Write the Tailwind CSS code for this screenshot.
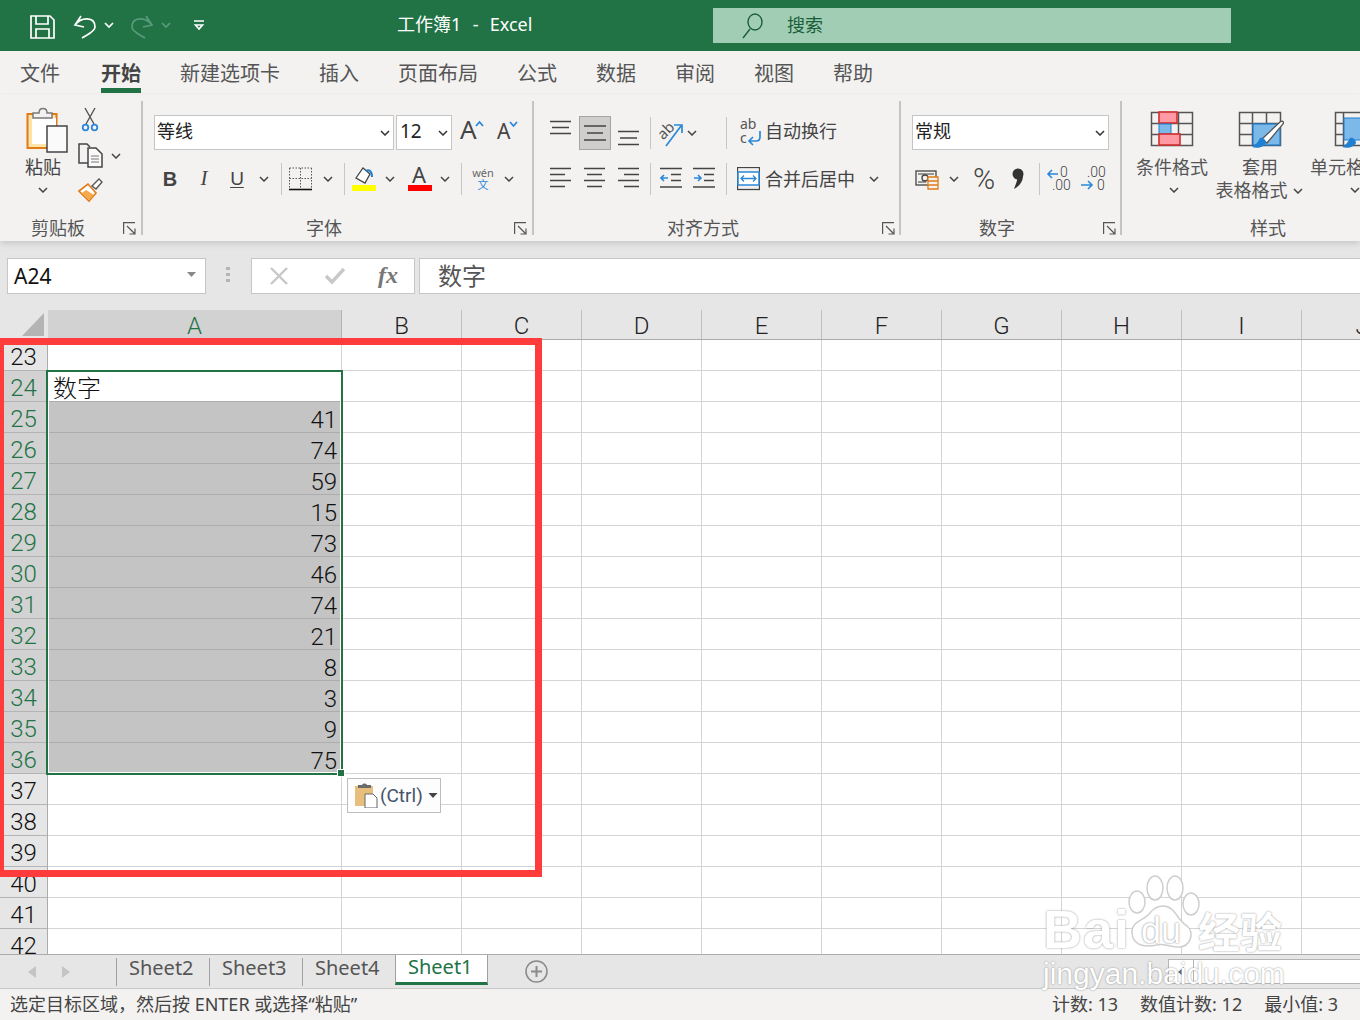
<!DOCTYPE html>
<html lang="zh">
<head>
<meta charset="utf-8">
<title>Excel</title>
<script src="https://cdn.jsdelivr.net/npm/@tailwindcss/browser@4"></script>
</head>
<body class="m-0">
<div class="relative w-[1360px] h-[1020px] overflow-hidden flex flex-col bg-white text-[#444] font-['Noto_Sans','Noto_Sans_CJK_SC',sans-serif]">

  <!-- title bar -->
  <div class="h-[51px] shrink-0 bg-[#217346] flex items-center text-white">
    <svg class="w-[200px] h-[51px] shrink-0 ml-[20px]" viewBox="20 0 200 51" fill="none" stroke="#fff" stroke-width="1.7">
      <path d="M31 16h19l4 4v18H31z"/><path d="M36 16v8h12v-8M36 38v-9h13v9"/>
      <path d="M75 25c6-8 20-9 20 2 0 5-9 8-13 11M81 16l-6 9 9 2"/>
      <path d="M105 23l4 4 4-4"/>
      <path d="M152 25c-6-8-20-9-20 2 0 5 9 8 13 11M146 16l6 9-9 2" stroke="#5a9a7c"/>
      <path d="M162 23l4 4 4-4" stroke="#5a9a7c"/>
      <path d="M194 21h10M195.500 25h7l-3.500 4z"/>
    </svg>
    <div class="ml-[177px] w-[136px] shrink-0 text-[18px] whitespace-pre [word-spacing:1px] -mt-[2px]">工作簿1  -  Excel</div>
    <div class="ml-[180px] w-[518px] h-[35px] bg-[#a0cdb3] flex items-center text-[#1b5e3a] text-[18px]">
      <svg class="w-[26px] h-[28px] ml-[28px]" viewBox="741 11 26 28" fill="none" stroke="#1b5e3a" stroke-width="1.400"><ellipse cx="755" cy="21" rx="7" ry="8"/><path d="M750 28l-7 9"/></svg>
      <span class="ml-[20px]">搜索</span>
    </div>
  </div>

  <!-- tabs -->
  <div class="h-[44px] shrink-0 bg-[#f3f2f1] flex pl-[20px] gap-[39px] text-[20px] leading-[46px] text-[#555]">
    <span class="mr-[2px]">文件</span>
    <span class="relative font-bold text-[#444]">开始<span class="absolute left-0 right-0 top-[37px] h-[5px] bg-[#217346]"></span></span>
    <span>新建选项卡</span><span>插入</span><span>页面布局</span><span>公式</span><span>数据</span><span>审阅</span><span>视图</span><span>帮助</span>
  </div>

  <!-- ribbon -->
  <div class="relative z-10 h-[146px] shrink-0 bg-[#f3f2f1] flex overflow-hidden shadow-[0_3px_6px_rgba(0,0,0,0.12)] text-[18px]">

    <!-- clipboard -->
    <div class="w-[141px] shrink-0 flex flex-col">
      <div class="h-[120px] flex">
        <div class="w-[78px] pt-[12px] flex flex-col items-start">
          <svg class="w-[78px] h-[46px]" viewBox="0 107 78 46" fill="none">
            <rect x="27.500" y="114" width="29" height="34" fill="#fde3a8" stroke="#e07b16" stroke-width="2"/>
            <rect x="32" y="118" width="24" height="26" fill="#fff"/>
            <path d="M33 118v-5h6c0-6 8-6 8 0h5v5z" fill="#f3f2f1" stroke="#7a7a7a" stroke-width="1.500"/>
            <rect x="47" y="126" width="20" height="26" fill="#fafafa" stroke="#444" stroke-width="1.500"/>
          </svg>
          <span class="ml-[25px] mt-[2px] h-[24px] leading-[24px]">粘贴</span>
          <svg class="ml-[38px] mt-[8px] w-[10px] h-[6px]" viewBox="0 0 10 6" fill="none" stroke="#444" stroke-width="1.500"><path d="M1 1l4 4 4-4"/></svg>
        </div>
        <div class="w-[62px] pt-[12px] flex flex-col items-start">
          <svg class="w-[26px] h-[26px]" viewBox="78 107 26 26" fill="none" stroke-width="1.400">
            <path d="M85 108l9 16M95 108l-9 16" stroke="#555"/>
            <circle cx="85.500" cy="127.500" r="2.800" stroke="#2b88d8" stroke-width="1.800"/><circle cx="94.500" cy="127.500" r="2.800" stroke="#2b88d8" stroke-width="1.800"/>
          </svg>
          <div class="flex items-center mt-[10px]">
            <svg class="w-[25px] h-[25px]" viewBox="78 143 25 25" fill="#f3f2f1" stroke="#444" stroke-width="1.500">
              <path d="M88 163h-9v-19h8l3 3"/><path d="M88 148h8l6 6v13H88z" fill="#fafafa"/><path d="M91 156h8M91 159h8M91 162h8" stroke="#777" stroke-width="1"/>
            </svg>
            <svg class="ml-[8px] w-[10px] h-[6px]" viewBox="0 0 10 6" fill="none" stroke="#444" stroke-width="1.500"><path d="M1 1l4 4 4-4"/></svg>
          </div>
          <svg class="mt-[10px] w-[26px] h-[25px]" viewBox="78 178 26 25" fill="none">
            <path d="M79 191l9-7 8 9-7 8z" fill="#fff" stroke="#e07b16" stroke-width="1.600"/><path d="M82 193l7 7 5-5-8-5z" fill="#f5a94a"/>
            <path d="M92 186l7-7 3 3-6 7z" fill="#fff" stroke="#555" stroke-width="1.400"/>
          </svg>
        </div>
      </div>
      <div class="h-[26px] flex items-center text-[#555]">
        <span class="ml-[31px] w-[54px] shrink-0">剪贴板</span>
        <svg class="ml-[38px] w-[13px] h-[13px] shrink-0" viewBox="0 0 13 13" fill="none" stroke="#555" stroke-width="1.200"><path d="M.6 12V.6H12M4 4l8 8M12 6.500V12H6.500"/></svg>
      </div>
    </div>
    <div class="w-[2px] h-[134px] mt-[6px] shrink-0 bg-[#c4c4c4]"></div>

    <!-- font -->
    <div class="w-[389px] shrink-0 flex flex-col">
      <div class="h-[120px] pt-[20px] flex flex-col">
        <div class="flex items-start h-[35px] ml-[11px]">
          <div class="w-[240px] h-[35px] bg-white border border-[#c6c6c6] flex items-center justify-between pl-[2px] pr-[3px] pb-[2px] text-[#222]">
            <span>等线</span>
            <svg class="w-[10px] h-[6px] mt-[2px]" viewBox="0 0 10 6" fill="none" stroke="#333" stroke-width="1.500"><path d="M1 1l4 4 4-4"/></svg>
          </div>
          <div class="ml-[2px] w-[56px] h-[35px] bg-white border border-[#c6c6c6] flex items-center justify-between pl-[3px] pr-[3px] pb-[2px] text-[19px] text-[#222]">
            <span>12</span>
            <svg class="w-[10px] h-[6px] mt-[2px]" viewBox="0 0 10 6" fill="none" stroke="#333" stroke-width="1.500"><path d="M1 1l4 4 4-4"/></svg>
          </div>
          <svg class="ml-[8px] w-[25px] h-[30px] overflow-visible" viewBox="460 113 25 30" fill="none">
            <text x="460" y="137" font-size="26" fill="#444" stroke="none">A</text>
            <path d="M476 124l3.500-4 3.500 4" stroke="#2b88d8" stroke-width="1.800"/>
          </svg>
          <svg class="ml-[12px] w-[21px] h-[30px] overflow-visible" viewBox="497 113 21 30" fill="none">
            <text x="497" y="137" font-size="21" fill="#444" stroke="none">A</text>
            <path d="M510 120l3.500 4 3.500-4" stroke="#2b88d8" stroke-width="1.800"/>
          </svg>
        </div>
        <div class="flex items-center h-[26px] mt-[16px]">
          <span class="ml-[15px] w-[24px] text-center font-['Liberation_Sans',sans-serif] font-bold text-[20px]">B</span>
          <span class="ml-[10px] w-[24px] text-center font-['Liberation_Serif',serif] italic text-[21px]">I</span>
          <span class="ml-[9px] w-[24px] text-center font-['Liberation_Sans',sans-serif] text-[19px] underline underline-offset-2">U</span>
          <svg class="ml-[10px] w-[10px] h-[6px]" viewBox="0 0 10 6" fill="none" stroke="#444" stroke-width="1.500"><path d="M1 1l4 4 4-4"/></svg>
          <div class="ml-[12px] w-px h-[32px] bg-[#c6c6c6]"></div>
          <svg class="ml-[7px] w-[24px] h-[24px]" viewBox="289 167 24 24" fill="none" stroke="#555">
            <path d="M289.500 168h22M289.500 168v21M311.500 168v21M289.500 178.500h22M300.500 168v21" stroke-dasharray="1.500 1.500"/>
            <path d="M289 189.500h23" stroke="#111" stroke-width="1.600"/>
          </svg>
          <svg class="ml-[10px] w-[10px] h-[6px]" viewBox="0 0 10 6" fill="none" stroke="#444" stroke-width="1.500"><path d="M1 1l4 4 4-4"/></svg>
          <div class="ml-[11px] w-px h-[32px] bg-[#c6c6c6]"></div>
          <svg class="ml-[7px] w-[24px] h-[26px]" viewBox="352 166 24 26" fill="none">
            <path d="M356 178l7-10 7 6-5 9z" fill="#fff" stroke="#444" stroke-width="1.300"/>
            <path d="M366 171c3-2 6 0 6 6" stroke="#1f7fd0" stroke-width="2"/>
            <rect x="352" y="185" width="24" height="6" fill="#ffff00"/>
          </svg>
          <svg class="ml-[9px] w-[10px] h-[6px]" viewBox="0 0 10 6" fill="none" stroke="#444" stroke-width="1.500"><path d="M1 1l4 4 4-4"/></svg>
          <svg class="ml-[13px] w-[24px] h-[26px] overflow-visible" viewBox="408 166 24 26">
            <text x="412" y="183" font-size="22" fill="#444">A</text>
            <rect x="408" y="185" width="24" height="6" fill="#ff0000"/>
          </svg>
          <svg class="ml-[8px] w-[10px] h-[6px]" viewBox="0 0 10 6" fill="none" stroke="#444" stroke-width="1.500"><path d="M1 1l4 4 4-4"/></svg>
          <div class="ml-[11px] w-px h-[32px] bg-[#c6c6c6]"></div>
          <div class="ml-[9px] w-[24px] flex flex-col items-center leading-[12px]">
            <span class="text-[11px] h-[12px] text-[#666]">wén</span><span class="text-[11px] h-[12px] text-[#2b88d8]">文</span>
          </div>
          <svg class="ml-[9px] w-[10px] h-[6px]" viewBox="0 0 10 6" fill="none" stroke="#444" stroke-width="1.500"><path d="M1 1l4 4 4-4"/></svg>
        </div>
      </div>
      <div class="h-[26px] flex items-center text-[#555]">
        <span class="ml-[163px] w-[36px] shrink-0">字体</span>
        <svg class="ml-[172px] w-[13px] h-[13px] shrink-0" viewBox="0 0 13 13" fill="none" stroke="#555" stroke-width="1.200"><path d="M.6 12V.6H12M4 4l8 8M12 6.500V12H6.500"/></svg>
      </div>
    </div>
    <div class="w-[2px] h-[134px] mt-[6px] shrink-0 bg-[#c4c4c4]"></div>

    <!-- alignment -->
    <div class="w-[365px] shrink-0 flex flex-col">
      <div class="h-[120px] pt-[20px] flex flex-col">
        <div class="flex items-center h-[35px]">
          <svg class="ml-[16px] w-[22px] h-[34px]" viewBox="550 115 22 34" fill="none" stroke="#444" stroke-width="1.500"><path d="M550 120.500h21M552 126.500h17M550 132.500h21"/></svg>
          <div class="ml-[7px] w-[32px] h-[34px] bg-[#cfcecd] border border-[#a5a5a5] flex items-center justify-center">
            <svg class="w-[22px] h-[22px]" viewBox="0 0 22 22" fill="none" stroke="#444" stroke-width="1.500"><path d="M0 4h22M3 11h16M0 18h22"/></svg>
          </div>
          <svg class="ml-[7px] w-[22px] h-[34px]" viewBox="618 115 22 34" fill="none" stroke="#444" stroke-width="1.500"><path d="M618 130.500h21M620 137h17M618 143.500h21"/></svg>
          <div class="ml-[10px] w-px h-[32px] bg-[#c6c6c6]"></div>
          <svg class="ml-[7px] w-[26px] h-[28px] overflow-visible" viewBox="658 117 26 28" fill="none">
            <text x="658" y="134" font-size="15" fill="#555" transform="rotate(-45 666 130)">ab</text>
            <path d="M666 144l15-20M674 123h8v8" stroke="#2b88d8" stroke-width="1.700"/>
          </svg>
          <svg class="ml-[3px] w-[10px] h-[6px]" viewBox="0 0 10 6" fill="none" stroke="#444" stroke-width="1.500"><path d="M1 1l4 4 4-4"/></svg>
          <div class="ml-[29px] w-px h-[32px] bg-[#c6c6c6]"></div>
          <svg class="ml-[13px] w-[23px] h-[30px] overflow-visible" viewBox="740 117 23 30" fill="none">
            <text x="740" y="128" font-size="14" fill="#555">ab</text><text x="740" y="142" font-size="14" fill="#555">c</text>
            <path d="M760 130v6c0 3-2 4-4 4h-6M753 136l-4 4 4 4" stroke="#2b88d8" stroke-width="1.700"/>
          </svg>
          <span class="ml-[2px] -mt-[2px] text-[#444]">自动换行</span>
        </div>
        <div class="flex items-center h-[26px] mt-[16px]">
          <svg class="ml-[16px] w-[22px] h-[24px]" viewBox="550 167 22 24" fill="none" stroke="#444" stroke-width="1.500"><path d="M550 168.500h21M550 174.500h15M550 180.500h21M550 186.500h15"/></svg>
          <svg class="ml-[12px] w-[22px] h-[24px]" viewBox="584 167 22 24" fill="none" stroke="#444" stroke-width="1.500"><path d="M584 168.500h21M587 174.500h15M584 180.500h21M587 186.500h15"/></svg>
          <svg class="ml-[12px] w-[22px] h-[24px]" viewBox="618 167 22 24" fill="none" stroke="#444" stroke-width="1.500"><path d="M618 168.500h21M624 174.500h15M618 180.500h21M624 186.500h15"/></svg>
          <div class="ml-[10px] w-px h-[32px] bg-[#c6c6c6]"></div>
          <svg class="ml-[9px] w-[22px] h-[24px]" viewBox="660 167 22 24" fill="none" stroke-width="1.500"><path d="M660 168.500h22M671 174.500h10M671 180.500h10M660 187h22" stroke="#444"/><path d="M668 178h-7M664 175l-3 3 3 3" stroke="#2b88d8" stroke-width="1.600"/></svg>
          <svg class="ml-[11px] w-[22px] h-[24px]" viewBox="693 167 22 24" fill="none" stroke-width="1.500"><path d="M693 168.500h22M704 174.500h10M704 180.500h10M693 187h22" stroke="#444"/><path d="M694 178h7M698 175l3 3-3 3" stroke="#2b88d8" stroke-width="1.600"/></svg>
          <div class="ml-[11px] w-px h-[32px] bg-[#c6c6c6]"></div>
          <svg class="ml-[10px] w-[23px] h-[24px]" viewBox="737 167 23 24" fill="none">
            <rect x="737.500" y="167.500" width="22" height="22" stroke="#444" stroke-width="1.300"/>
            <rect x="738" y="172" width="21" height="13" fill="#fff" stroke="#2b88d8" stroke-width="1.500"/>
            <path d="M741 178.500h15M744 175.500l-3 3 3 3M753 175.500l3 3-3 3" stroke="#2b88d8" stroke-width="1.300"/>
          </svg>
          <span class="ml-[5px] w-[90px] shrink-0">合并后居中</span>
          <svg class="ml-[14px] w-[10px] h-[6px]" viewBox="0 0 10 6" fill="none" stroke="#444" stroke-width="1.500"><path d="M1 1l4 4 4-4"/></svg>
        </div>
      </div>
      <div class="h-[26px] flex items-center text-[#555]">
        <span class="ml-[133px] w-[72px] shrink-0">对齐方式</span>
        <svg class="ml-[143px] w-[13px] h-[13px] shrink-0" viewBox="0 0 13 13" fill="none" stroke="#555" stroke-width="1.200"><path d="M.6 12V.6H12M4 4l8 8M12 6.500V12H6.500"/></svg>
      </div>
    </div>
    <div class="w-[2px] h-[134px] mt-[6px] shrink-0 bg-[#c4c4c4]"></div>

    <!-- number -->
    <div class="w-[219px] shrink-0 flex flex-col">
      <div class="h-[120px] pt-[20px] flex flex-col">
        <div class="ml-[11px] w-[197px] h-[35px] bg-white border border-[#c6c6c6] flex items-center justify-between pl-[2px] pr-[3px] pb-[2px] text-[#222]">
          <span>常规</span>
          <svg class="w-[10px] h-[6px] mt-[2px]" viewBox="0 0 10 6" fill="none" stroke="#333" stroke-width="1.500"><path d="M1 1l4 4 4-4"/></svg>
        </div>
        <div class="flex items-center h-[26px] mt-[16px]">
          <svg class="ml-[14px] w-[27px] h-[24px]" viewBox="915 168 27 24" fill="none" stroke-width="1.300">
            <rect x="916" y="172" width="20" height="14" stroke="#444"/><path d="M918 175h16M918 183h8" stroke="#777"/><circle cx="925" cy="179" r="3" stroke="#444"/>
            <path d="M928 178h10v12h-10z" fill="#f3f2f1" stroke="#e07b16"/><path d="M928 182h10M928 186h10" stroke="#e07b16"/>
          </svg>
          <svg class="ml-[7px] w-[10px] h-[6px]" viewBox="0 0 10 6" fill="none" stroke="#444" stroke-width="1.500"><path d="M1 1l4 4 4-4"/></svg>
          <span class="ml-[10px] w-[30px] text-center font-['Roboto',sans-serif] font-light text-[30px] leading-[26px]">%</span>
          <svg class="ml-[9px] w-[20px] h-[24px]" viewBox="1008 167 20 24" fill="#333"><circle cx="1018" cy="174" r="5.500"/><path d="M1020 169c5 5 4 15-6 20 2-6 4-9 3-13z"/></svg>
          <div class="ml-[11px] w-px h-[32px] bg-[#c6c6c6]"></div>
          <svg class="ml-[7px] w-[25px] h-[26px] overflow-visible" viewBox="1047 166 25 26" fill="none">
            <text x="1060" y="177" font-size="14" fill="#444" font-family="Roboto" font-weight="300">0</text><text x="1052" y="190" font-size="14" fill="#444" font-family="Roboto" font-weight="300">.00</text>
            <path d="M1058 174h-10M1052 170l-4 4 4 4" stroke="#2b88d8" stroke-width="1.600"/>
          </svg>
          <svg class="ml-[9px] w-[25px] h-[26px] overflow-visible" viewBox="1081 166 25 26" fill="none">
            <text x="1087" y="177" font-size="14" fill="#444" font-family="Roboto" font-weight="300">.00</text><text x="1097" y="190" font-size="14" fill="#444" font-family="Roboto" font-weight="300">0</text>
            <path d="M1081 185h11M1088 181l4 4-4 4" stroke="#2b88d8" stroke-width="1.600"/>
          </svg>
        </div>
      </div>
      <div class="h-[26px] flex items-center text-[#555]">
        <span class="ml-[78px] w-[36px] shrink-0">数字</span>
        <svg class="ml-[88px] w-[13px] h-[13px] shrink-0" viewBox="0 0 13 13" fill="none" stroke="#555" stroke-width="1.200"><path d="M.6 12V.6H12M4 4l8 8M12 6.500V12H6.500"/></svg>
      </div>
    </div>
    <div class="w-[2px] h-[134px] mt-[6px] shrink-0 bg-[#c4c4c4]"></div>

    <!-- styles -->
    <div class="w-[292px] shrink-0 flex flex-col">
      <div class="h-[120px] flex pt-[16px] leading-[23px] text-[#555]">
        <div class="ml-[8px] w-[84px] shrink-0 flex flex-col items-center">
          <svg class="w-[44px] h-[36px]" viewBox="1150 111 44 36" fill="none">
            <path d="M1151.500 112.500h41v33h-41zM1151.500 123.500h41M1151.500 134.500h41M1164.500 112.500v33M1178.500 112.500v33" stroke="#555" stroke-width="1.500"/>
            <rect x="1159" y="112" width="18" height="11" fill="#ff99a3" stroke="#d32f2f" stroke-width="1.600"/>
            <rect x="1159" y="124" width="12" height="10" fill="#7cb8e8" stroke="#1f7fd0" stroke-width="1"/>
            <rect x="1159" y="134" width="21" height="11" fill="#ff99a3" stroke="#d32f2f" stroke-width="1.600"/>
          </svg>
          <span class="mt-[9px]">条件格式</span>
          <svg class="mt-[8px] ml-[4px] w-[10px] h-[6px]" viewBox="0 0 10 6" fill="none" stroke="#444" stroke-width="1.500"><path d="M1 1l4 4 4-4"/></svg>
        </div>
        <div class="w-[90px] shrink-0 flex flex-col items-center">
          <svg class="ml-[3px] w-[46px] h-[40px]" viewBox="1238 111 46 40" fill="none">
            <path d="M1239.500 112.500h41v33h-41zM1239.500 123.500h41M1239.500 134.500h41M1252.500 112.500v33M1266.500 112.500v33" stroke="#555" stroke-width="1.500"/>
            <rect x="1253" y="124" width="27" height="21" fill="#7cb8e8" stroke="#1f7fd0" stroke-width="1.200"/>
            <path d="M1262 139l18-17c3-2 4 0 3 2l-16 19z" fill="#fff" stroke="#555" stroke-width="1.300"/>
            <path d="M1260 138c3-1 6 2 6 5-2 4-8 6-14 4 4-2 6-5 8-9z" fill="#1f7fd0"/>
          </svg>
          <span class="mt-[5px] ml-[2px]">套用</span>
          <div class="flex items-center whitespace-nowrap">
            <span>表格格式</span>
            <svg class="ml-[5px] w-[10px] h-[6px]" viewBox="0 0 10 6" fill="none" stroke="#444" stroke-width="1.500"><path d="M1 1l4 4 4-4"/></svg>
          </div>
        </div>
        <div class="ml-[6px] w-[90px] shrink-0 flex flex-col items-center">
          <svg class="ml-[4px] w-[46px] h-[40px]" viewBox="1334 111 46 40" fill="none">
            <path d="M1335.500 112.500h41v33h-41zM1335.500 123.500h41M1335.500 134.500h41M1343.500 112.500v33" stroke="#555" stroke-width="1.500"/>
            <rect x="1344" y="118" width="33" height="22" fill="#7cb8e8" stroke="#1f7fd0"/>
            <path d="M1350 138c3-1 6 2 6 5-2 4-8 6-14 4 4-2 6-5 8-9z" fill="#1f7fd0"/>
          </svg>
          <span class="mt-[5px] whitespace-nowrap">单元格样式</span>
          <svg class="mt-[8px] w-[10px] h-[6px]" viewBox="0 0 10 6" fill="none" stroke="#444" stroke-width="1.500"><path d="M1 1l4 4 4-4"/></svg>
        </div>
      </div>
      <div class="h-[26px] flex items-center text-[#555]">
        <span class="ml-[128px]">样式</span>
      </div>
    </div>
  </div>

  <!-- formula bar -->
  <div class="h-[69px] shrink-0 bg-[#e6e6e6] flex items-start pt-[17px]">
    <div class="ml-[7px] w-[199px] h-[36px] bg-white border border-[#c6c6c6] flex items-center justify-between pl-[6px] pr-[9px] text-[21px] text-[#111]">
      <span class="mt-[2px]">A24</span>
      <svg class="w-[9px] h-[5px] -mt-[3px]" viewBox="0 0 9 5" fill="#888"><path d="M0 0h9L4.500 5z"/></svg>
    </div>
    <svg class="ml-[20px] w-[4px] h-[16px] mt-[9px]" viewBox="0 0 4 16" fill="#b5b5b5"><rect width="4" height="3"/><rect y="6" width="4" height="3"/><rect y="12" width="4" height="3"/></svg>
    <div class="ml-[21px] w-[164px] h-[36px] bg-white border border-[#c6c6c6] flex items-center">
      <svg class="ml-[18px] w-[18px] h-[18px]" viewBox="0 0 18 18" fill="none" stroke="#c8c8c8" stroke-width="2.400"><path d="M1 1l16 16M17 1L1 17"/></svg>
      <svg class="ml-[37px] w-[20px] h-[18px]" viewBox="0 0 20 18" fill="none" stroke="#c8c8c8" stroke-width="3.400"><path d="M1 9l6 6L19 2"/></svg>
      <span class="ml-[33px] -mt-[3px] font-['Liberation_Serif',serif] italic font-bold text-[24px] text-[#777]">fx</span>
    </div>
    <div class="ml-[4px] flex-1 -mr-[2px] h-[36px] bg-white border border-[#c6c6c6] flex items-center pl-[18px] text-[24px] text-[#555]">数字</div>
  </div>

  <!-- column headers -->
  <div class="h-[30px] shrink-0 bg-[#e6e6e6] flex font-['Roboto','Noto_Sans_CJK_SC',sans-serif] font-light text-[24px] leading-[33px] text-center text-[#222] border-b border-[#ababab]">
    <div class="w-[48px] shrink-0 relative">
      <svg class="absolute left-0 top-0 w-[47px] h-[29px]" viewBox="0 0 47 29" fill="#b4b4b4"><path d="M22 26L44 3v23z"/></svg>
    </div>
    <div class="w-[294px] shrink-0 bg-[#d2d2d2] border-r border-[#b4b4b4] text-[#217346]">A</div>
    <div class="w-[120px] shrink-0 border-r border-[#c0c0c0]">B</div>
    <div class="w-[120px] shrink-0 border-r border-[#c0c0c0]">C</div>
    <div class="w-[120px] shrink-0 border-r border-[#c0c0c0]">D</div>
    <div class="w-[120px] shrink-0 border-r border-[#c0c0c0]">E</div>
    <div class="w-[120px] shrink-0 border-r border-[#c0c0c0]">F</div>
    <div class="w-[120px] shrink-0 border-r border-[#c0c0c0]">G</div>
    <div class="w-[120px] shrink-0 border-r border-[#c0c0c0]">H</div>
    <div class="w-[120px] shrink-0 border-r border-[#c0c0c0]">I</div>
    <div class="w-[120px] shrink-0">J</div>
  </div>

  <!-- grid -->
  <div class="relative h-[614px] shrink-0 flex overflow-hidden font-['Roboto','Noto_Sans_CJK_SC',sans-serif] font-light text-[24px] text-[#111]">
    <div class="w-[48px] shrink-0 bg-[#e6e6e6] border-r border-[#ababab] text-center leading-[35px] [&>div]:h-[31px] [&>div]:border-b">
      <div class="border-[#b4b4b4]">23</div>
      <div class="bg-[#d2d2d2] border-[#b4b4b4] text-[#217346]">24</div>
      <div class="bg-[#d2d2d2] border-[#b4b4b4] text-[#217346]">25</div>
      <div class="bg-[#d2d2d2] border-[#b4b4b4] text-[#217346]">26</div>
      <div class="bg-[#d2d2d2] border-[#b4b4b4] text-[#217346]">27</div>
      <div class="bg-[#d2d2d2] border-[#b4b4b4] text-[#217346]">28</div>
      <div class="bg-[#d2d2d2] border-[#b4b4b4] text-[#217346]">29</div>
      <div class="bg-[#d2d2d2] border-[#b4b4b4] text-[#217346]">30</div>
      <div class="bg-[#d2d2d2] border-[#b4b4b4] text-[#217346]">31</div>
      <div class="bg-[#d2d2d2] border-[#b4b4b4] text-[#217346]">32</div>
      <div class="bg-[#d2d2d2] border-[#b4b4b4] text-[#217346]">33</div>
      <div class="bg-[#d2d2d2] border-[#b4b4b4] text-[#217346]">34</div>
      <div class="bg-[#d2d2d2] border-[#b4b4b4] text-[#217346]">35</div>
      <div class="bg-[#d2d2d2] border-[#b4b4b4] text-[#217346]">36</div>
      <div class="border-[#b4b4b4]">37</div>
      <div class="border-[#b4b4b4]">38</div>
      <div class="border-[#b4b4b4]">39</div>
      <div class="border-[#b4b4b4]">40</div>
      <div class="border-[#b4b4b4]">41</div>
      <div class="border-[#b4b4b4]">42</div>
    </div>
    <div class="w-[294px] shrink-0 border-r border-[#d4d4d4] text-right leading-[36px] [&>div]:h-[31px] [&>div]:border-b [&>div]:pr-[4px]">
      <div class="border-[#d4d4d4]"></div>
      <div class="border-[#adadad] text-left pl-[5px]">数字</div>
      <div class="bg-[#c4c4c4] border-[#adadad]">41</div>
      <div class="bg-[#c4c4c4] border-[#adadad]">74</div>
      <div class="bg-[#c4c4c4] border-[#adadad]">59</div>
      <div class="bg-[#c4c4c4] border-[#adadad]">15</div>
      <div class="bg-[#c4c4c4] border-[#adadad]">73</div>
      <div class="bg-[#c4c4c4] border-[#adadad]">46</div>
      <div class="bg-[#c4c4c4] border-[#adadad]">74</div>
      <div class="bg-[#c4c4c4] border-[#adadad]">21</div>
      <div class="bg-[#c4c4c4] border-[#adadad]">8</div>
      <div class="bg-[#c4c4c4] border-[#adadad]">3</div>
      <div class="bg-[#c4c4c4] border-[#adadad]">9</div>
      <div class="bg-[#c4c4c4] border-[#adadad]">75</div>
      <div class="border-[#d4d4d4]"></div>
      <div class="border-[#d4d4d4]"></div>
      <div class="border-[#d4d4d4]"></div>
      <div class="border-[#d4d4d4]"></div>
      <div class="border-[#d4d4d4]"></div>
      <div class="border-[#d4d4d4]"></div>
    </div>
    <div class="flex-1 bg-[linear-gradient(to_right,transparent_119px,#d4d4d4_119px,#d4d4d4_120px,transparent_120px),linear-gradient(to_bottom,transparent_30px,#d4d4d4_30px,#d4d4d4_31px,transparent_31px)] bg-[length:120px_31px,31px_31px]"></div>

    <!-- selection -->
    <div class="absolute left-[46px] top-[30px] w-[297px] h-[405px] border-2 border-[#217346] shadow-[inset_0_0_0_1px_#fff]"></div>
    <div class="absolute left-[337px] top-[429px] w-[8px] h-[8px] bg-[#217346] border border-white"></div>

    <!-- paste options -->
    <div class="absolute left-[347px] top-[438px] w-[94px] h-[35px] bg-[#fdfdfd] border border-[#bdbdbd] flex items-center font-normal text-[19px] text-[#44546a]">
      <svg class="ml-[7px] w-[23px] h-[25px] shrink-0" viewBox="0 0 23 25">
        <rect x="0" y="3" width="18" height="20" fill="#e8be7c"/>
        <path d="M3 5V2h4c1-2 4-2 5 0h4v3z" fill="#6b6b6b"/>
        <path d="M10 11h8l4 4v10H10z" fill="#fff" stroke="#666"/>
      </svg>
      <span class="ml-[2px] leading-none">(Ctrl)</span>
      <svg class="ml-[5px] w-[10px] h-[5px] shrink-0" viewBox="0 0 9 5" fill="#444"><path d="M0 0h9L4.500 5z"/></svg>
    </div>
  </div>

  <!-- sheet tabs -->
  <div class="h-[34px] shrink-0 bg-[#e6e6e6] border-t border-[#ababab] flex items-start text-[20px] text-[#555]">
    <svg class="ml-[28px] mt-[11px] w-[8px] h-[12px]" viewBox="0 0 8 12" fill="#c4c4c4"><path d="M8 0v12L0 6z"/></svg>
    <svg class="ml-[26px] mt-[11px] w-[8px] h-[12px]" viewBox="0 0 8 12" fill="#c4c4c4"><path d="M0 0v12l8-6z"/></svg>
    <div class="ml-[46px] w-[93px] h-[28px] mt-[3px] border-l border-[#a0a0a0] pl-[12px] leading-[20px]">Sheet2</div>
    <div class="w-[93px] h-[28px] mt-[3px] border-l border-[#a0a0a0] pl-[12px] leading-[20px]">Sheet3</div>
    <div class="w-[93px] h-[28px] mt-[3px] border-l border-[#a0a0a0] pl-[12px] leading-[20px]">Sheet4</div>
    <div class="w-[93px] h-[30px] bg-white border-x border-b-[3px] border-[#a0a0a0] border-b-[#217346] pl-[12px] leading-[24px] text-[#217346]">Sheet1</div>
    <svg class="ml-[37px] mt-[5px] w-[23px] h-[23px]" viewBox="0 0 23 23" fill="none" stroke="#8a8a8a" stroke-width="1.500"><circle cx="11.500" cy="11.500" r="10.500"/><path d="M11.500 6v11M6 11.500h11" stroke-width="2"/></svg>
    <svg class="ml-[600px] mt-[9px] w-[4px] h-[16px]" viewBox="0 0 4 16" fill="#b5b5b5"><rect width="4" height="3"/><rect y="6" width="4" height="3"/><rect y="12" width="4" height="3"/></svg>
    <div class="ml-[16px] mt-[4px] w-[26px] h-[25px] bg-white border border-[#b4b4b4] flex items-center justify-center">
      <svg class="w-[6px] h-[10px]" viewBox="0 0 6 10" fill="#666"><path d="M6 0v10L0 5z"/></svg>
    </div>
    <div class="flex-1 mt-[4px] h-[25px] bg-white border-y border-[#b4b4b4]"></div>
  </div>

  <!-- status bar -->
  <div class="h-[32px] shrink-0 bg-[#f3f2f1] border-t border-[#c8c8c8] flex items-center justify-between pl-[10px] pr-[22px] text-[18px]">
    <span>选定目标区域，然后按 ENTER 或选择“粘贴”</span>
    <div class="flex gap-[22px]"><span>计数: 13</span><span>数值计数: 12</span><span>最小值: 3</span></div>
  </div>

  <!-- red annotation -->
  <div class="absolute left-[-3px] top-[338px] w-[545px] h-[539px] border-[7px] border-[#ff3b3b]"></div>

  <!-- watermark -->
  <div class="absolute left-[1040px] top-[870px] w-[320px] h-[130px] text-white [text-shadow:0_0_2px_#8a8a8a]">
    <svg class="absolute left-[85px] top-0 w-[75px] h-[82px]" viewBox="0 0 75 82" fill="#fff" stroke="#cfcfcf" stroke-width="1.500">
      <ellipse cx="30" cy="18" rx="8" ry="12"/><ellipse cx="50" cy="18" rx="8" ry="12"/><ellipse cx="12" cy="32" rx="8" ry="11"/><ellipse cx="66" cy="34" rx="8" ry="11"/>
      <path d="M38 36c12 0 14 14 24 20 8 6 4 22-10 21-8 0-14-4-20-2-10 2-24 2-25-12-1-12 12-12 18-20 3-4 7-7 13-7z"/>
    </svg>
    <span class="absolute left-[3px] top-[24px] text-[54px] font-['Liberation_Sans',sans-serif] font-bold leading-[70px] tracking-[1px]">Bai</span>
    <span class="absolute left-[101px] top-[36px] text-[36px] font-['Liberation_Sans',sans-serif] leading-[50px] [text-shadow:0_0_2px_#777]">du</span>
    <span class="absolute left-[158px] top-[30px] text-[42px] font-bold leading-[60px] font-['Noto_Sans_CJK_SC',sans-serif] whitespace-nowrap">经验</span>
    <span class="absolute left-[3px] top-[84px] text-[30px] font-['Liberation_Sans',sans-serif] leading-[40px] whitespace-nowrap">jingyan.baidu.com</span>
  </div>
</div>
</body>
</html>
